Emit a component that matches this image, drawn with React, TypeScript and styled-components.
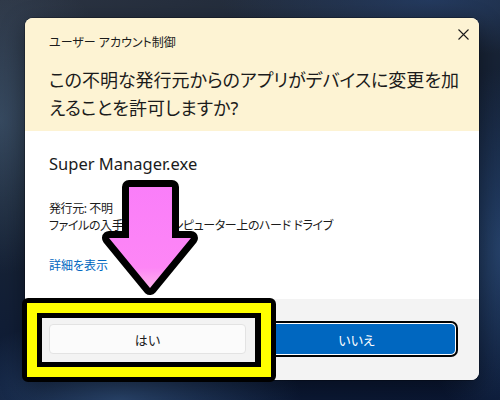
import * as React from 'react'
import styled, { createGlobalStyle } from 'styled-components'

const GlobalStyle = createGlobalStyle`
  html, body {
    margin: 0;
    padding: 0;
    width: 500px;
    height: 400px;
    overflow: hidden;
  }
  * {
    box-sizing: border-box;
  }
`

const Desktop = styled.div`
  position: relative;
  width: 500px;
  height: 400px;
  padding: 18px 21px 0 25px;
  overflow: hidden;
  background:
    radial-gradient(ellipse 140px 260px at 505px 250px, rgba(60, 100, 150, 0.55), transparent 70%),
    radial-gradient(ellipse 260px 120px at 120px 400px, rgba(70, 110, 160, 0.5), transparent 70%),
    radial-gradient(ellipse 180px 220px at 0px 120px, rgba(80, 110, 140, 0.45), transparent 70%),
    radial-gradient(ellipse 300px 80px at 430px 0px, rgba(40, 70, 120, 0.6), transparent 70%),
    linear-gradient(160deg, #2c3442 0%, #1a2536 35%, #0d1b36 65%, #0a1733 100%);
  font-family: 'Noto Sans', 'Noto Sans CJK JP', sans-serif;
  font-feature-settings: 'palt' 1;
  color: #1b1b1b;
`

const Dialog = styled.div`
  width: 454px;
  height: 362px;
  display: flex;
  flex-direction: column;
  border-radius: 8px;
  overflow: hidden;
  background: #ffffff;
  box-shadow: 0 0 0 1px rgba(0, 0, 0, 0.25), 0 8px 24px rgba(0, 0, 0, 0.4);
`

const Header = styled.div`
  position: relative;
  height: 113px;
  padding: 17px 24px 0;
  background: #fdf3d3;
`

const Caption = styled.div`
  font-size: 12px;
  line-height: 16px;
  margin-bottom: 15px;
`

const Close = styled.button`
  position: absolute;
  top: 4px;
  right: 4px;
  width: 24px;
  height: 24px;
  padding: 0;
  border: none;
  background: transparent;
  display: flex;
  align-items: center;
  justify-content: center;
`

const Question = styled.div`
  font-size: 18px;
  line-height: 28px;
  white-space: nowrap;
`

const Body = styled.div`
  flex: 1;
  padding: 22px 24px 0;
  background: #ffffff;
`

const AppName = styled.div`
  font-size: 16.5px;
  line-height: 22px;
  margin-bottom: 25px;
`

const Detail = styled.div`
  font-size: 12px;
  line-height: 17px;
  letter-spacing: -0.4px;
  white-space: nowrap;
`

const MoreLink = styled.a`
  display: block;
  margin-top: 23px;
  font-size: 12px;
  line-height: 17px;
  color: #0067c0;
  text-decoration: none;
`

const Footer = styled.div`
  height: 81px;
  padding: 25px 24px 0;
  display: grid;
  grid-template-columns: 1fr 1fr;
  gap: 12px;
  align-content: start;
  background: #f3f3f3;
`

const Button = styled.button<{ $primary?: boolean }>`
  height: 30px;
  border-radius: 4px;
  font-family: inherit;
  font-size: 13px;
  font-feature-settings: 'palt' 1;
  cursor: default;
  border: 1px solid ${(p) => (p.$primary ? '#0067c0' : '#e3e3e3')};
  background: ${(p) => (p.$primary ? '#0067c0' : '#fbfbfb')};
  color: ${(p) => (p.$primary ? '#ffffff' : '#1b1b1b')};
  box-shadow: ${(p) => (p.$primary ? '0 0 0 1px #ffffff, 0 0 0 3px #000000' : 'none')};
`

const Highlight = styled.div`
  position: absolute;
  left: 22px;
  top: 298px;
  width: 254px;
  height: 84px;
  border: 5px solid #000000;
  border-radius: 6px;
`

const HighlightInner = styled.div`
  width: 100%;
  height: 100%;
  border: 10px solid #ffff00;
`

const HighlightCore = styled.div`
  width: 100%;
  height: 100%;
  border: 5px solid #000000;
  border-right-width: 6px;
`

const Arrow = styled.svg`
  position: absolute;
  left: 100px;
  top: 172px;
  pointer-events: none;
`

const PointerArrow = () => (
  <Arrow width='100' height='126' viewBox='0 0 100 126'>
    <defs>
      <linearGradient id='arrow-pink' x1='0' y1='0' x2='0' y2='1'>
        <stop offset='0' stopColor='#fa7ef9' />
        <stop offset='0.8' stopColor='#fd86f6' />
        <stop offset='1' stopColor='#ffb3ee' />
      </linearGradient>
    </defs>
    <polygon
      points='29,15 72,15 72,66 91,66 50,116 9,66 29,66'
      fill='url(#arrow-pink)'
      stroke='#000'
      strokeWidth='14'
      strokeLinejoin='round'
      paintOrder='stroke'
    />
  </Arrow>
)

export default function App() {
  return (
    <Desktop>
      <GlobalStyle />
      <Dialog>
        <Header>
          <Caption>ユーザー アカウント制御</Caption>
          <Close aria-label='閉じる'>
            <svg width='11' height='11' viewBox='0 0 11 11'>
              <path d='M0.5 0.5 L10.5 10.5 M10.5 0.5 L0.5 10.5' stroke='#1b1b1b' strokeWidth='1.1' />
            </svg>
          </Close>
          <Question>
            この不明な発行元からのアプリがデバイスに変更を加
            <br />
            えることを許可しますか?
          </Question>
        </Header>
        <Body>
          <AppName>Super Manager.exe</AppName>
          <Detail>発行元: 不明</Detail>
          <Detail>ファイルの入手先: このコンピューター上のハード ドライブ</Detail>
          <MoreLink>詳細を表示</MoreLink>
        </Body>
        <Footer>
          <Button>はい</Button>
          <Button $primary>いいえ</Button>
        </Footer>
      </Dialog>
      <PointerArrow />
      <Highlight>
        <HighlightInner>
          <HighlightCore />
        </HighlightInner>
      </Highlight>
    </Desktop>
  )
}
